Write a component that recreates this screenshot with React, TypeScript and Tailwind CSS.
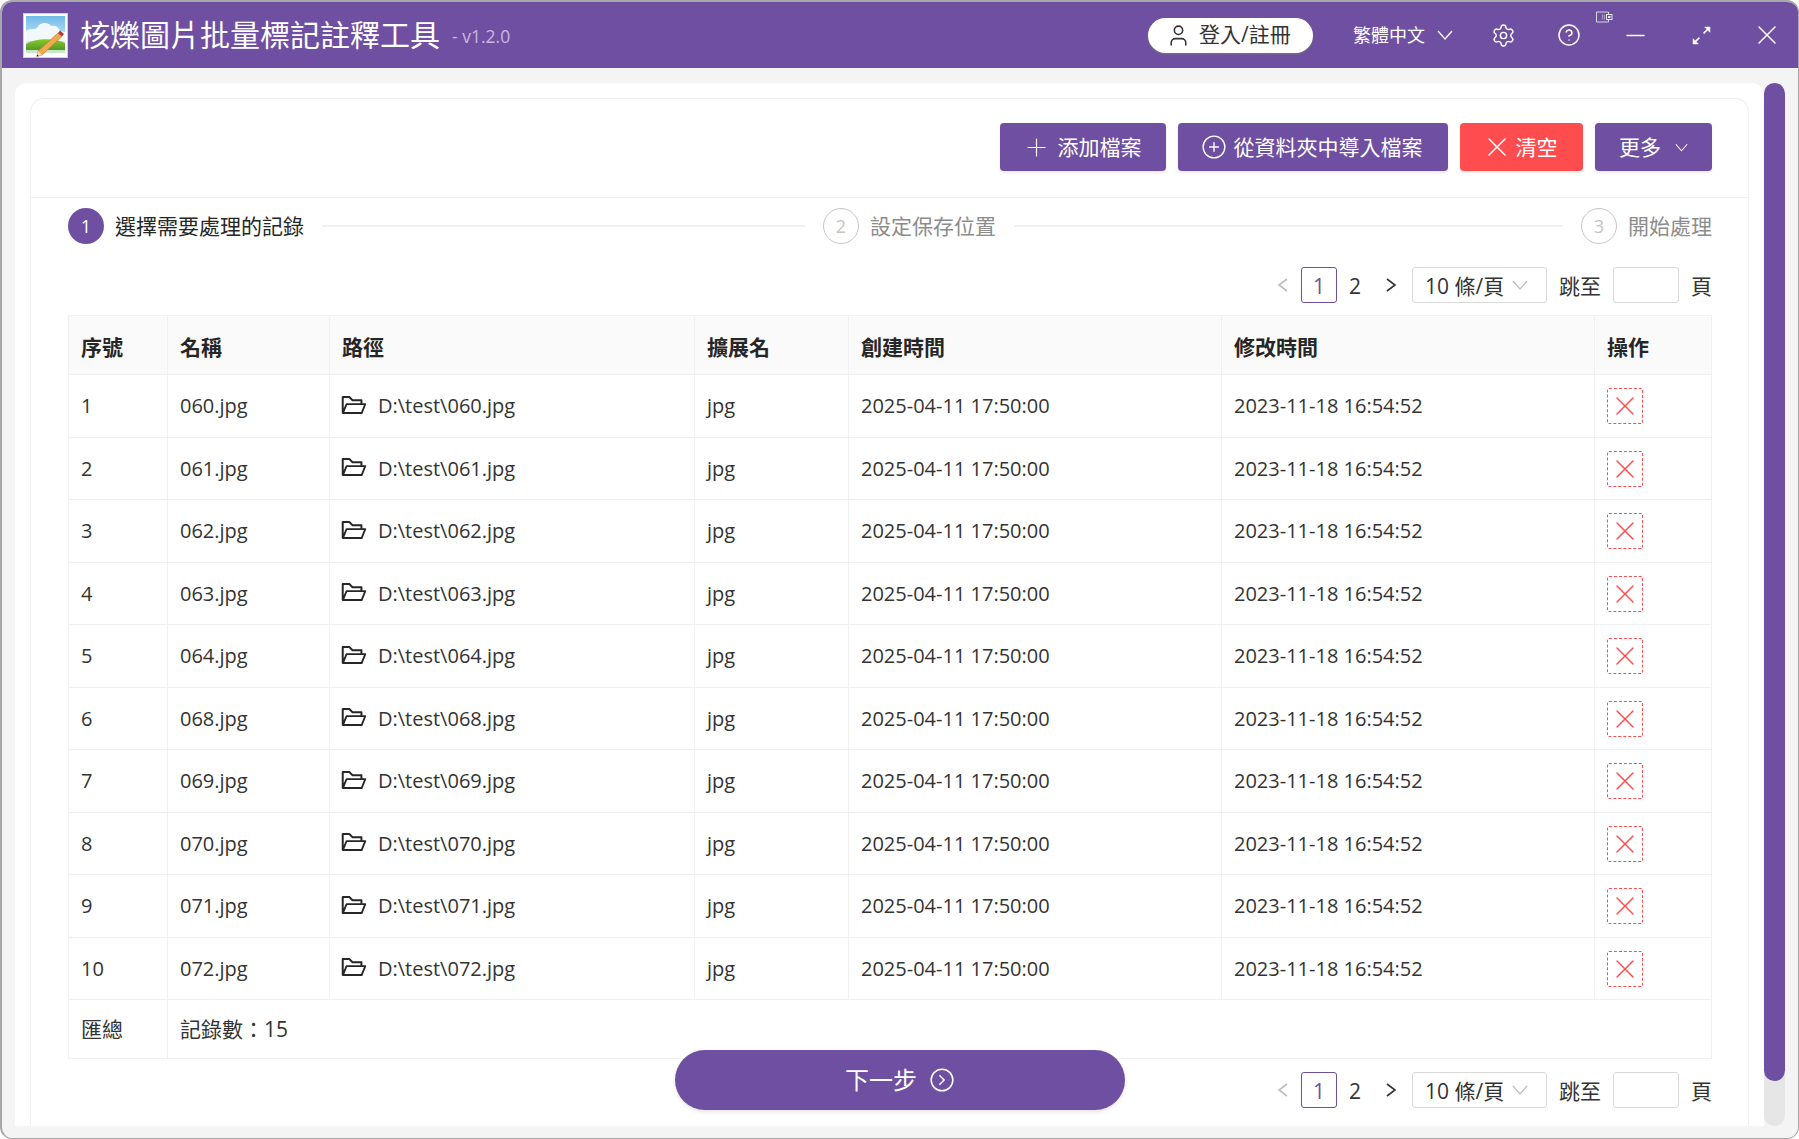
import { CircleChevronRight, CircleHelp, CirclePlus, Minus, Plus, Settings, User, X } from "lucide-react";
import { AiOutlineFolderOpen } from "react-icons/ai";

const rows = [
  { id: 1, name: "060" },
  { id: 2, name: "061" },
  { id: 3, name: "062" },
  { id: 4, name: "063" },
  { id: 5, name: "064" },
  { id: 6, name: "068" },
  { id: 7, name: "069" },
  { id: 8, name: "070" },
  { id: 9, name: "071" },
  { id: 10, name: "072" },
];

const columns = ["序號", "名稱", "路徑", "擴展名", "創建時間", "修改時間", "操作"];

const Logo = () => (
  <svg viewBox="0 0 45 45" className="h-[45px] w-[45px] shrink-0">
    <defs>
      <linearGradient id="sky" x1="0" y1="0" x2="0" y2="1">
        <stop offset="0" stopColor="#6fbce8" />
        <stop offset="1" stopColor="#e8f4fb" />
      </linearGradient>
      <linearGradient id="hill" x1="0" y1="0" x2="0" y2="1">
        <stop offset="0" stopColor="#8ac926" />
        <stop offset="1" stopColor="#4f9a2b" />
      </linearGradient>
    </defs>
    <rect x="0.5" y="0.5" width="44" height="44" fill="#fff" stroke="#cfcfcf" />
    <rect x="3" y="3" width="39" height="34" fill="url(#sky)" />
    <path d="M3 18c4-3 8-1 11-3 2-5 10-7 14-2 4-1 8 1 9 5l5 1v9H3z" fill="#f2f9fd" />
    <path d="M3 31c8-5 26-7 39-1v7H3z" fill="url(#hill)" />
    <rect x="3" y="37" width="39" height="3" fill="#c9e8c9" />
    <path d="M35 20l4 3.500L19 42l-5 1.500 1-5.500z" fill="#f0a94e" stroke="#b8742a" strokeWidth="0.6" />
    <path d="M35 20l2-2.500 4 3.500-2 2.500z" fill="#b83a32" />
    <path d="M15 38l4 4-5 1.500z" fill="#f6dcb4" />
    <path d="M14.300 41.500l1.500 1.500-2.300.6z" fill="#222" />
  </svg>
);

const ExpandIcon = () => (
  <svg viewBox="0 0 18 18" className="h-[19px] w-[19px] shrink-0" fill="none" stroke="#fff" strokeWidth="1.5">
    <path d="M3 15L7 11M11 7l4-4" />
    <path d="M1 17v-5l5 5zM17 1v5l-5-5z" fill="#fff" strokeWidth="0.5" />
  </svg>
);

const TrayIcon = () => (
  <svg viewBox="0 0 17 12" className="absolute left-[1594px] top-[9px] h-3 w-[17px]" fill="none">
    <path d="M12.500 3V1H.5v10h12V9" stroke="#d8d8d8" />
    <path d="M6.500 3.500v5M8.500 3.500v5" stroke="#a99ac4" strokeWidth="1.200" />
    <rect x="10.500" y="3.500" width="5.500" height="5" stroke="#e4e4e4" />
    <rect x="12" y="5" width="2.500" height="2" fill="#e4e4e4" />
  </svg>
);

// wide antd-style chevron, lucide's is too narrow for this
const DownChevron = ({ className }: { className: string }) => (
  <svg viewBox="0 0 16 10" className={`shrink-0 ${className}`} fill="none" stroke="currentColor" strokeWidth="1.300">
    <path d="M1 1l7 8 7-8" />
  </svg>
);

const SideChevron = ({ left, className }: { left?: boolean; className: string }) => (
  <svg viewBox="0 0 11 14" className={`h-[14px] w-[11px] shrink-0 ${className}`} fill="none" stroke="currentColor" strokeWidth="1.600">
    <path d={left ? "M10 1L2 7l8 6" : "M1 1l8 6-8 6"} />
  </svg>
);

const Pagination = ({ className }: { className: string }) => (
  <div className={`flex h-9 items-center justify-end text-[21px] text-[#333] ${className}`}>
    <SideChevron left className="mr-[13px] text-[#bdbdbd]" />
    <span className="flex h-9 w-[36px] items-center justify-center rounded-[3px] border border-[#6f4fa1] pt-[3px] text-[#6f4fa1]">1</span>
    <span className="w-[36px] pt-[3px] text-center">2</span>
    <SideChevron className="ml-[13px] mr-[15px]" />
    <div className="flex h-9 w-[135px] items-center rounded-[3px] border border-[#d9d9d9] pl-[12px]">
      <span className="whitespace-nowrap pt-[3px]">10 條/頁</span>
      <DownChevron className="ml-[8px] h-[10px] w-[16px] text-[#bfbfbf]" />
    </div>
    <span className="ml-3 whitespace-nowrap pt-[3px]">跳至</span>
    <div className="ml-3 h-9 w-[66px] rounded-[3px] border border-[#d9d9d9]" />
    <span className="ml-3 whitespace-nowrap pt-[3px]">頁</span>
  </div>
);

const Step = ({ num, label, active }: { num: number; label: string; active?: boolean }) => (
  <div className="flex shrink-0 items-center">
    <span
      className={`flex h-9 w-9 items-center justify-center rounded-full text-[18px] ${
        active ? "bg-[#6f4fa1] text-white" : "border border-[#c4c4c4] text-[#c4c4c4]"
      }`}
    >
      {num}
    </span>
    <span className={`ml-[11px] whitespace-nowrap pt-px ${active ? "text-[#262626]" : "text-[#8c8c8c]"}`}>{label}</span>
  </div>
);

const cell = "border-b border-r border-[#f0f0f0] px-[12px] align-middle";

const App = () => {
  return (
    <div className="h-[1139px] w-[1799px] bg-white font-['Open_Sans','Noto_Sans_CJK_TC',sans-serif] text-[20px]">
      <div className="flex h-full flex-col overflow-hidden rounded-[12px] border-b border-l-2 border-r border-t-2 border-[#a8a8a8] bg-[#f4f4f4]">
        <header className="relative flex h-[66px] shrink-0 items-center bg-[#6f4fa1] pl-[21px] pr-[19px] text-white">
          <Logo />
          <span className="ml-3 whitespace-nowrap text-[30px] leading-none">核爍圖片批量標記註釋工具</span>
          <span className="ml-3 mt-[2px] text-[17.5px] text-[#c8b8e0]">- v1.2.0</span>
          <div className="ml-auto flex h-[35px] w-[165px] items-center rounded-full bg-white pl-[18px] text-[21px] text-[#333] shadow-[0_1px_2px_#777]">
            <User size={25} strokeWidth={1.5} className="shrink-0" />
            <span className="ml-[8px] whitespace-nowrap">登入/註冊</span>
          </div>
          <div className="ml-10 flex w-[106px] items-center text-[18px]">
            <span className="whitespace-nowrap">繁體中文</span>
            <DownChevron className="ml-[12px] h-[10px] w-[16px]" />
          </div>
          <div className="ml-8 flex items-center gap-[42px]">
            <span className="flex w-6 justify-center"><Settings size={25} strokeWidth={1.4} className="shrink-0" /></span>
            <span className="flex w-6 justify-center"><CircleHelp size={24} strokeWidth={1.5} className="shrink-0" /></span>
            <span className="flex w-6 justify-center"><Minus size={29} strokeWidth={1.3} className="shrink-0" /></span>
            <span className="flex w-6 justify-center"><ExpandIcon /></span>
            <span className="flex w-6 justify-center"><X size={32} strokeWidth={1.1} className="shrink-0" /></span>
          </div>
          <TrayIcon />
        </header>

        <div className="flex min-h-0 flex-1 pb-3 pl-[13px] pr-[13px] pt-[15px]">
          <main className="flex flex-1 flex-col rounded-t-[12px] bg-white px-[15px] pt-[15px]">
            <div className="relative flex-1 rounded-t-[14px] border-x border-t border-[#f0f0f0] pl-[37px] pr-[36px] text-[#333]">
              <div className="-ml-[37px] -mr-[36px] flex h-[99px] items-start justify-end gap-3 border-b border-[#f0f0f0] pr-[36px] pt-6 text-[21px] text-white">
                <button className="flex h-12 w-[166px] items-center justify-center rounded-[4px] bg-[#6f4fa1] shadow-[0_2px_3px_#ece8f2]">
                  <Plus size={29} strokeWidth={1} className="-ml-[3px] shrink-0" />
                  <span className="ml-[7px] pt-px">添加檔案</span>
                </button>
                <button className="flex h-12 w-[270px] items-center justify-center rounded-[4px] bg-[#6f4fa1] shadow-[0_2px_3px_#ece8f2]">
                  <CirclePlus size={26} strokeWidth={1.3} className="-ml-[3px] shrink-0" />
                  <span className="ml-[7px] pt-px">從資料夾中導入檔案</span>
                </button>
                <button className="flex h-12 w-[123px] items-center justify-center rounded-[4px] bg-[#ff4d4f] shadow-[0_2px_3px_#fbe8e8]">
                  <X size={32} strokeWidth={1.1} className="-ml-[5px] shrink-0" />
                  <span className="ml-[3px] pt-px">清空</span>
                </button>
                <button className="flex h-12 w-[117px] items-center justify-center rounded-[4px] bg-[#6f4fa1] shadow-[0_2px_3px_#ece8f2]">
                  <span className="pt-px">更多</span>
                  <DownChevron className="ml-[14px] h-[9px] w-[13px]" />
                </button>
              </div>

              <div className="mt-[10px] flex items-center gap-[18px] text-[21px]">
                <Step num={1} label="選擇需要處理的記錄" active />
                <div className="h-[2px] w-[483px] bg-[#f0f0f0]" />
                <Step num={2} label="設定保存位置" />
                <div className="h-[2px] flex-1 bg-[#f0f0f0]" />
                <Step num={3} label="開始處理" />
              </div>

              <Pagination className="mt-[23px]" />

              <table className="mt-3 w-[1644px] table-fixed border-separate border-spacing-0 border-l border-t border-[#f0f0f0]">
                <colgroup>
                  <col className="w-[99px]" />
                  <col className="w-[162px]" />
                  <col className="w-[365px]" />
                  <col className="w-[154px]" />
                  <col className="w-[373px]" />
                  <col className="w-[373px]" />
                  <col />
                </colgroup>
                <thead>
                  <tr className="h-[59px] bg-[#fafafa] text-[21px] text-[#262626]">
                    {columns.map((col) => (
                      <th key={col} className={`${cell} pt-[5px] text-left font-bold`}>
                        {col}
                      </th>
                    ))}
                  </tr>
                </thead>
                <tbody>
                  {rows.map((row) => (
                    <tr key={row.id} className="h-[62.5px]">
                      <td className={`${cell} pt-px`}>{row.id}</td>
                      <td className={`${cell} pt-px`}>{row.name}.jpg</td>
                      <td className={`${cell} pt-px`}>
                        <div className="flex items-center">
                          <AiOutlineFolderOpen size={28} className="-ml-[2px] -mt-[3px] shrink-0 text-[#262626]" />
                          <span className="ml-[10px]">D:\test\{row.name}.jpg</span>
                        </div>
                      </td>
                      <td className={`${cell} pt-px`}>jpg</td>
                      <td className={`${cell} pt-px`}>2025-04-11 17:50:00</td>
                      <td className={`${cell} pt-px`}>2023-11-18 16:54:52</td>
                      <td className={`${cell} pt-px`}>
                        <span className="flex h-9 w-9 items-center justify-center rounded-[2px] border border-dashed border-[#ff4d4f] text-[#ff4d4f]">
                          <X size={32} strokeWidth={1.1} className="shrink-0" />
                        </span>
                      </td>
                    </tr>
                  ))}
                  <tr className="h-[59px] text-[21px]">
                    <td className={`${cell} pt-px`}>匯總</td>
                    <td className={`${cell} pt-px`} colSpan={6}>
                      記錄數：15
                    </td>
                  </tr>
                </tbody>
              </table>

              <Pagination className="mt-[13px]" />

              <button className="absolute left-[644px] top-[951px] flex h-[60px] w-[450px] items-center justify-center rounded-full bg-[#6f4fa1] text-[24px] text-white shadow-[0_2px_4px_#e4e4e4]">
                <span>下一步</span>
                <CircleChevronRight size={26} strokeWidth={1.4} className="ml-3" />
              </button>
            </div>
          </main>

          <div className="w-[21px] shrink-0 rounded-full bg-[#e6e6e6]">
            <div className="h-[998px] rounded-full bg-[#6f4fa1]" />
          </div>
        </div>
      </div>
    </div>
  );
};

export default App;
